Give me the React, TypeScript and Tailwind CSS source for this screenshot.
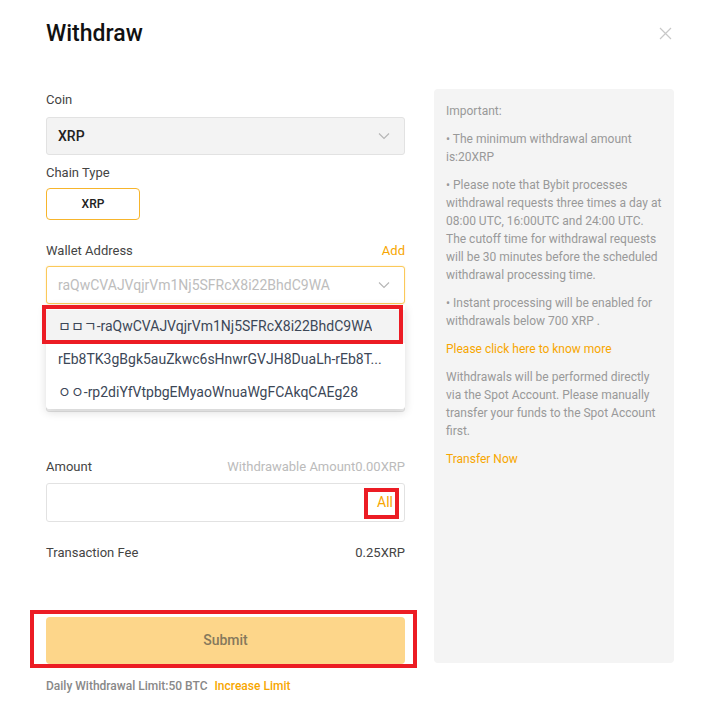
const addresses = [
  { label: "ㅁㅁㄱ-raQwCVAJVqjrVm1Nj5SFRcX8i22BhdC9WA", active: true },
  { label: "rEb8TK3gBgk5auZkwc6sHnwrGVJH8DuaLh-rEb8T...", active: false },
  { label: "ㅇㅇ-rp2diYfVtpbgEMyaoWnuaWgFCAkqCAEg28", active: false },
];

const Chevron = () => (
  <svg width="12" height="8" viewBox="0 0 12 8" fill="none" className="shrink-0">
    <path d="M1 1.5 6 6.5l5-5" stroke="#b5b5b5" strokeWidth="1.1" />
  </svg>
);

const App = () => {
  return (
    <div
      className="w-[712px] h-[716px] bg-white relative overflow-hidden"
      style={{ fontFamily: "Roboto, 'Noto Sans CJK KR', sans-serif" }}
    >
      <div className="flex items-start justify-between pl-[46px] pr-[40px] pt-[19px]">
        <h1 className="text-[23px] leading-[30px] font-medium text-[#111]">Withdraw</h1>
        <svg width="13" height="13" viewBox="0 0 13 13" className="mt-[8px]">
          <path d="M1 1l11 11M12 1 1 12" stroke="#c8c8c8" strokeWidth="1.2" />
        </svg>
      </div>

      <div className="flex gap-[29px] pl-[46px] pt-[40px]">
        {/* left form */}
        <div className="w-[359px] flex flex-col">
          <div className="text-[13px] leading-[18px] text-[#444] mt-[2px]">Coin</div>
          <div className="mt-[8px] h-[38px] rounded-[3px] border border-[#e2e2e2] bg-[#f3f3f3] flex items-center justify-between pl-[11px] pr-[14px]">
            <span className="text-[14px] font-medium text-[#222]">XRP</span>
            <Chevron />
          </div>

          <div className="text-[13px] leading-[18px] text-[#444] mt-[9px]">Chain Type</div>
          <div className="mt-[6px] w-[94px] h-[32px] rounded-[4px] border border-[#f7b52c] flex items-center justify-center text-[12px] font-medium text-[#222]">
            XRP
          </div>

          <div className="flex justify-between mt-[22px] text-[13px] leading-[18px]">
            <span className="text-[#444]">Wallet Address</span>
            <span className="text-[#f7a600]">Add</span>
          </div>
          <div className="relative mt-[6px]">
            <div className="h-[38px] rounded-[3px] border border-[#fbc95a] bg-white flex items-center justify-between pl-[11px] pr-[14px] shadow-[0_0_2px_#fde9b8]">
              <span className="text-[14px] text-[#bdbdbd]">raQwCVAJVqjrVm1Nj5SFRcX8i22BhdC9WA</span>
              <Chevron />
            </div>

            {/* dropdown */}
            <div className="absolute left-0 right-0 top-[39px] z-10 bg-white rounded-b-[3px] shadow-[0_3px_10px_rgba(0,0,0,0.14)] pt-[5px]">
              {addresses.map((a) => (
                <div
                  key={a.label}
                  className={`h-[33px] flex items-center px-[12px] text-[14px] text-[#3c4757] ${a.active ? "bg-[#f3f3f3]" : ""}`}
                >
                  <span className="truncate">{a.label}</span>
                </div>
              ))}
              <div className="absolute left-[-4px] right-[2px] top-[0px] h-[39px] border-[4px] border-[#ec1c24]" />
            </div>
          </div>

          {/* tag field hidden under the dropdown */}
          <div className="mt-[70px] h-[38px] rounded-[3px] border border-[#e2e2e2] bg-[#f3f3f3]" />

          <div className="flex justify-between mt-[46px] text-[13px] leading-[18px]">
            <span className="text-[#444]">Amount</span>
            <span className="text-[#bbb]">Withdrawable Amount0.00XRP</span>
          </div>
          <div className="relative mt-[7px] h-[39px] rounded-[3px] border border-[#e2e2e2] flex items-center justify-end pr-[11px]">
            <span className="text-[14px] text-[#f7a600]">All</span>
            <div className="absolute right-[5px] top-[4px] w-[35px] h-[31px] border-[4px] border-[#ec1c24]" />
          </div>

          <div className="flex justify-between mt-[22px] text-[13px] leading-[18px] text-[#444]">
            <span>Transaction Fee</span>
            <span>0.25XRP</span>
          </div>

          <div className="relative mt-[55px]">
            <div className="absolute left-[-16px] right-[-12px] top-[-7px] bottom-[-4px] border-[4px] border-[#ec1c24]" />
            <div className="h-[47px] rounded-[4px] bg-[#fdd68a] flex items-center justify-center text-[14px] font-medium text-[#86795c]">
              Submit
            </div>
          </div>

          <div className="mt-[14px] text-[12px] leading-[16px] font-medium text-[#888]">
            Daily Withdrawal Limit:50 BTC <span className="ml-[4px] text-[#f7a600]">Increase Limit</span>
          </div>
        </div>

        {/* right notice */}
        <div className="w-[240px] h-[574px] rounded-[4px] bg-[#f4f4f4] px-[12px] pt-[13px] text-[12px] leading-[18px] text-[#999]">
          <p>Important:</p>
          <p className="mt-[10px]">• The minimum withdrawal amount is:20XRP</p>
          <p className="mt-[10px]">
            • Please note that Bybit processes withdrawal requests three times a day at 08:00 UTC,
            16:00UTC and 24:00 UTC. The cutoff time for withdrawal requests will be 30 minutes before
            the scheduled withdrawal processing time.
          </p>
          <p className="mt-[10px]">• Instant processing will be enabled for withdrawals below 700 XRP .</p>
          <p className="mt-[10px] text-[#f7a600]">Please click here to know more</p>
          <p className="mt-[10px]">
            Withdrawals will be performed directly via the Spot Account. Please manually transfer
            your funds to the Spot Account first.
          </p>
          <p className="mt-[10px] text-[#f7a600]">Transfer Now</p>
        </div>
      </div>
    </div>
  );
};

export default App;
